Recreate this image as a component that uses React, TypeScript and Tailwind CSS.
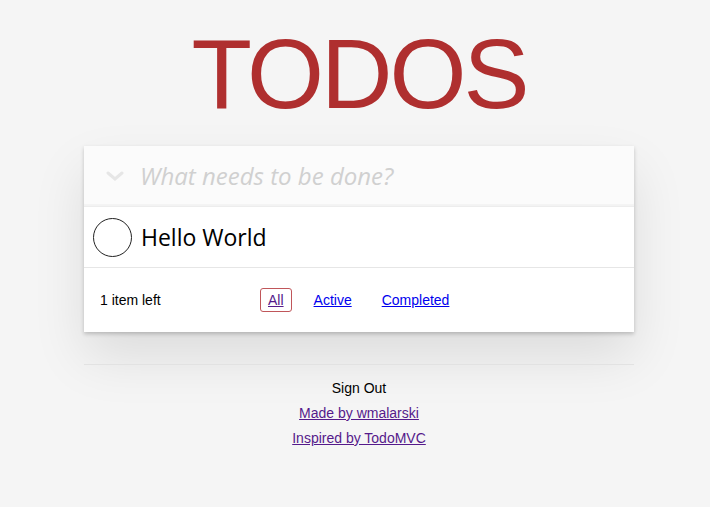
const filters = ["All", "Active", "Completed"];

const App = () => {
  return (
    <div className="min-h-[507px] bg-[#f5f5f5] font-['Liberation_Sans',Arial,sans-serif] text-black">
      <div className="ml-[84px] flex w-[550px] flex-col items-center pt-[16px]">
        <h1 className="text-[99px] font-normal leading-[116px] tracking-[-3px] text-[#af2f2f]">TODOS</h1>
        <section className="mt-[14px] w-full bg-white shadow-[0_2px_4px_rgba(0,0,0,0.2),0_25px_50px_rgba(0,0,0,0.1)]">
          <header className="flex h-[60px] items-center bg-[#fbfbfb] shadow-[inset_0_-2px_1px_rgba(0,0,0,0.03)]">
            <svg className="ml-[22px] mr-[16px] h-[10px] w-[18px] text-[#e6e6e6]" viewBox="0 0 18 10" fill="none" stroke="currentColor" strokeWidth="3" strokeLinecap="round">
              <polyline points="2,2 9,8 16,2" />
            </svg>
            <input
              className="flex-1 bg-transparent font-['Open_Sans',sans-serif] text-[24px] italic text-[#4d4d4d] placeholder:text-[#d0d0d0] outline-none"
              placeholder="What needs to be done?"
            />
          </header>
          <ul className="border-t border-[#ededed]">
            <li className="flex h-[61px] items-center border-b border-[#e6e6e6]">
              <span className="ml-[9px] mr-[9px] h-[39px] w-[39px] rounded-full border border-[#222]" />
              <label className="font-['Open_Sans',sans-serif] text-[23px] text-black">Hello World</label>
            </li>
          </ul>
          <footer className="flex h-[64px] items-center text-[14px]">
            <span className="ml-[16px] w-[160px]">1 item left</span>
            <ul className="flex items-center gap-[14px]">
              {filters.map((f) => (
                <li key={f}>
                  <a
                    href="#"
                    className={
                      f === "All"
                        ? "rounded-[3px] border border-[#c0565a] px-[7px] py-[3px] text-[#551a8b] underline"
                        : "rounded-[3px] border border-transparent px-[7px] py-[3px] text-[#0000ee] underline"
                    }
                  >
                    {f}
                  </a>
                </li>
              ))}
            </ul>
          </footer>
        </section>
        <hr className="mt-[32px] w-full border-t border-[#e2e2e2]" />
        <div className="mt-[11px] flex flex-col items-center text-[14px] leading-[25px]">
          <span>Sign Out</span>
          <a href="#" className="text-[#551a8b] underline">Made by wmalarski</a>
          <a href="#" className="text-[#551a8b] underline">Inspired by TodoMVC</a>
        </div>
      </div>
    </div>
  );
};

export default App;
